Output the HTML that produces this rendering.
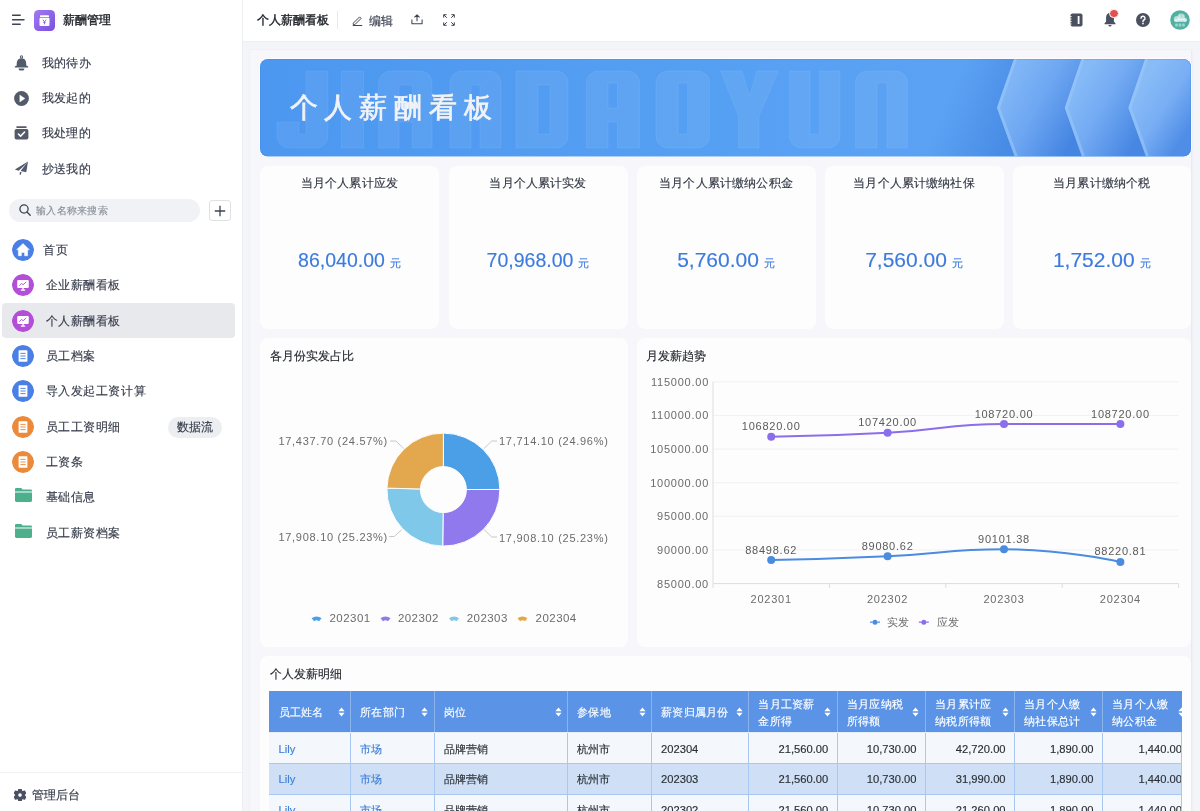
<!DOCTYPE html>
<html><head><meta charset="utf-8">
<style>
*{box-sizing:border-box;margin:0;padding:0}
html,body{width:1200px;height:811px;overflow:hidden}
#root{position:absolute;left:0;top:0;width:1200px;height:811px;will-change:transform}
body{position:relative;background:#f4f5f9;font-family:"Liberation Sans",sans-serif;color:#3a4050;-webkit-text-stroke:0.15px currentColor}
.abs{position:absolute}
#side{position:absolute;left:0;top:0;width:243px;height:811px;background:#fff;border-right:1px solid #eceef1}
.nav{position:absolute;left:41.5px;font-size:11.6px;line-height:14px;color:#363c4a;white-space:nowrap;letter-spacing:0.45px}
.ni{position:absolute;left:14px}
.it{position:absolute;left:45.5px;font-size:11.6px;line-height:14px;color:#363c4a;white-space:nowrap;letter-spacing:0.6px}
.ic{position:absolute;left:12.4px;width:22px;height:22px;border-radius:50%}
#top{position:absolute;left:243px;top:0;width:957px;height:42px;background:#fff;border-bottom:1px solid #eef0f3}
#wrap{position:absolute;left:250px;top:50px;width:941px;height:761px;background:#f6f6fb;box-shadow:0 0 2px 0.5px rgba(20,20,60,0.06)}
.card{position:absolute;background:#fdfdfe;border-radius:8px}
.ct{position:absolute;left:0;right:0;text-align:center;font-size:12px;line-height:14px;color:#333844;letter-spacing:0.15px;white-space:nowrap}
.cv{position:absolute;left:0;right:0;text-align:center;color:#3d7ade;white-space:nowrap}
.cv b{font-weight:normal;font-size:19.5px;letter-spacing:0px}
.cv i{font-style:normal;font-size:11px;margin-left:5px}
.lbl{position:absolute;font-size:11px;letter-spacing:0.72px;color:#6e6e6e;white-space:nowrap;line-height:12px}
.hd{font-size:11px;color:#fff;padding-left:9.5px;white-space:nowrap;letter-spacing:0.3px}
.td{font-size:11.2px;color:#2b2f36;padding-left:9.5px;white-space:nowrap}
.blue{color:#3f7fd9}
</style></head><body><div id="root">

<!-- SIDEBAR -->
<div id="side">
  <svg class="abs" style="left:12px;top:14px" width="13" height="12" viewBox="0 0 13 12"><path d="M0.5 1.3H8.2M0.5 5.8H12M0.5 10.3H8.2" stroke="#3d4352" stroke-width="1.4" stroke-linecap="round"/></svg>
  <svg class="abs" style="left:34px;top:10px" width="21" height="21" viewBox="0 0 21 21">
    <defs><linearGradient id="gp" x1="0" y1="0" x2="1" y2="1"><stop offset="0" stop-color="#a07af2"/><stop offset="1" stop-color="#7b4fdf"/></linearGradient></defs>
    <rect width="21" height="21" rx="4.5" fill="url(#gp)"/>
    <rect x="6" y="5.2" width="9" height="1.8" rx="0.6" fill="#fff"/>
    <rect x="5.5" y="7.8" width="10" height="8.2" rx="1" fill="#fff"/>
    <path d="M8.8 9.6L10.5 11.8L12.2 9.6M10.5 11.8V14.4M9.2 12.3H11.8" stroke="#8b5fe8" stroke-width="0.9" fill="none"/>
  </svg>
  <div class="abs" style="left:62.5px;top:13px;font-size:12px;line-height:14px;letter-spacing:0.2px;color:#1f2329;-webkit-text-stroke:0.4px #1f2329">薪酬管理</div>

  <!-- bell -->
  <svg class="ni" style="top:54.5px" width="15" height="16" viewBox="0 0 15 16"><circle cx="7.5" cy="1.9" r="1.6" fill="#535a6a"/><circle cx="7.5" cy="1.9" r="0.55" fill="#fff"/><path d="M2.7 10.6C2.7 6.6 3.2 3.4 7.5 3.2C11.8 3.4 12.3 6.6 12.3 10.6L14.2 11.6V12.6H0.8V11.6Z" fill="#535a6a"/><path d="M4.6 13.4H10.4A2.9 2.2 0 0 1 4.6 13.4Z" fill="#535a6a"/></svg>
  <div class="nav" style="top:56px">我的待办</div>
  <!-- play -->
  <svg class="ni" style="top:90.5px" width="15" height="15" viewBox="0 0 15 15"><circle cx="7.5" cy="7.5" r="7.4" fill="#535a6a"/><path d="M5.8 4.1L10.9 7.5L5.8 10.9z" fill="#fff" stroke="#fff" stroke-width="0.4" stroke-linejoin="round"/></svg>
  <div class="nav" style="top:91px">我发起的</div>
  <!-- box check -->
  <svg class="ni" style="top:126px" width="15" height="14" viewBox="0 0 15 14"><rect x="2.3" y="0.3" width="10.4" height="1.6" rx="0.7" fill="#535a6a"/><rect x="0.6" y="3" width="13.8" height="10.6" rx="1.8" fill="#535a6a"/><path d="M4.4 8L6.6 10.1L10.6 6" stroke="#fff" stroke-width="1.6" fill="none" stroke-linecap="round" stroke-linejoin="round"/></svg>
  <div class="nav" style="top:126px">我处理的</div>
  <!-- plane -->
  <svg class="ni" style="top:161px" width="15" height="14" viewBox="0 0 15 14"><path d="M14 0.4L0.9 8.4L4.6 9.7L10.4 4.6Z M14 0.4L6.6 9.9L12.3 11.3Z M5.9 10.9L7.6 10.9L6.6 13.9L5.6 13.6Z" fill="#535a6a"/></svg>
  <div class="nav" style="top:162px">抄送我的</div>

  <!-- search -->
  <div class="abs" style="left:9px;top:198.5px;width:191px;height:23px;border-radius:12px;background:#f1f2f5"></div>
  <svg class="abs" style="left:19px;top:204px" width="12" height="12" viewBox="0 0 12 12"><circle cx="5" cy="5" r="4.1" stroke="#3d4352" stroke-width="1.3" fill="none"/><path d="M8 8L11.2 11.2" stroke="#3d4352" stroke-width="1.3" stroke-linecap="round"/></svg>
  <div class="abs" style="left:36px;top:204.5px;font-size:10.2px;line-height:12px;letter-spacing:0.3px;color:#8c929c">输入名称来搜索</div>
  <div class="abs" style="left:209px;top:199.5px;width:22px;height:21.5px;border:1px solid #dfe1e5;border-radius:3px;background:#fff"></div>
  <svg class="abs" style="left:214px;top:204.5px" width="12" height="12" viewBox="0 0 12 12"><path d="M6 0.8V11.2M0.8 6H11.2" stroke="#3d4352" stroke-width="1.3"/></svg>

  <!-- items -->
  <div class="abs" style="left:2px;top:302.5px;width:233px;height:35.5px;border-radius:4px;background:#e8e9ed"></div>

  <svg class="ic" style="top:239.0px" viewBox="0 0 21 21"><circle cx="10.5" cy="10.5" r="10.5" fill="#4a80e6"/><path d="M10.5 4.4L16.6 10.2H14.9V16H12V12.8H9V16H6.1V10.2H4.4z" fill="#fff" stroke="#fff" stroke-width="0.5" stroke-linejoin="round"/></svg>
  <div class="it" style="top:242.5px;left:43px">首页</div>

  <svg class="ic" style="top:274.0px" viewBox="0 0 21 21"><circle cx="10.5" cy="10.5" r="10.5" fill="#b24ed8"/><rect x="5" y="5.8" width="11" height="7.6" rx="1" fill="#fff"/><path d="M7 11.2L9 9L10.6 10.2L13.6 7.6" stroke="#b24ed8" stroke-width="0.9" fill="none"/><path d="M8.4 15.4h4.2M10.5 13.4v2" stroke="#fff" stroke-width="1.3"/></svg>
  <div class="it" style="top:278px">企业薪酬看板</div>

  <svg class="ic" style="top:309.5px" viewBox="0 0 21 21"><circle cx="10.5" cy="10.5" r="10.5" fill="#b24ed8"/><rect x="5" y="5.8" width="11" height="7.6" rx="1" fill="#fff"/><path d="M7 11.2L9 9L10.6 10.2L13.6 7.6" stroke="#b24ed8" stroke-width="0.9" fill="none"/><path d="M8.4 15.4h4.2M10.5 13.4v2" stroke="#fff" stroke-width="1.3"/></svg>
  <div class="it" style="top:313.5px">个人薪酬看板</div>

  <svg class="ic" style="top:344.5px" viewBox="0 0 21 21"><circle cx="10.5" cy="10.5" r="10.5" fill="#4a80e6"/><rect x="6.3" y="5" width="8.4" height="11" rx="0.8" fill="#fff"/><path d="M8 8h5M8 10.5h5M8 13h5" stroke="#4a80e6" stroke-width="0.9"/></svg>
  <div class="it" style="top:349px">员工档案</div>

  <svg class="ic" style="top:380.0px" viewBox="0 0 21 21"><circle cx="10.5" cy="10.5" r="10.5" fill="#4a80e6"/><rect x="6.3" y="5" width="8.4" height="11" rx="0.8" fill="#fff"/><path d="M8 8h5M8 10.5h5M8 13h5" stroke="#4a80e6" stroke-width="0.9"/></svg>
  <div class="it" style="top:384px">导入发起工资计算</div>

  <svg class="ic" style="top:415.5px" viewBox="0 0 21 21"><circle cx="10.5" cy="10.5" r="10.5" fill="#ec8a3b"/><rect x="6.3" y="5" width="8.4" height="11" rx="0.8" fill="#fff"/><path d="M8 8h5M8 10.5h5M8 13h5" stroke="#ec8a3b" stroke-width="0.9"/></svg>
  <div class="it" style="top:419.5px">员工工资明细</div>
  <div class="abs" style="left:167.5px;top:416.5px;width:54px;height:21.5px;border-radius:11px;background:#eceef1;font-size:12px;line-height:21.5px;text-align:center;color:#363c4a">数据流</div>

  <svg class="ic" style="top:450.5px" viewBox="0 0 21 21"><circle cx="10.5" cy="10.5" r="10.5" fill="#ec8a3b"/><rect x="6.3" y="5" width="8.4" height="11" rx="0.8" fill="#fff"/><path d="M8 8h5M8 10.5h5M8 13h5" stroke="#ec8a3b" stroke-width="0.9"/></svg>
  <div class="it" style="top:455px">工资条</div>

  <svg class="abs" style="left:15px;top:488px" width="17" height="14" viewBox="0 0 17 14"><path d="M0 1.2A1.2 1.2 0 0 1 1.2 0H6.2L7.6 1.5H15.8A1.2 1.2 0 0 1 17 2.7V3.6H0z" fill="#4bb08b"/><path d="M0 4.4H17V12.6A1.4 1.4 0 0 1 15.6 14H1.4A1.4 1.4 0 0 1 0 12.6z" fill="#4bb08b"/></svg>
  <div class="it" style="top:490px">基础信息</div>

  <svg class="abs" style="left:15px;top:523.5px" width="17" height="14" viewBox="0 0 17 14"><path d="M0 1.2A1.2 1.2 0 0 1 1.2 0H6.2L7.6 1.5H15.8A1.2 1.2 0 0 1 17 2.7V3.6H0z" fill="#4bb08b"/><path d="M0 4.4H17V12.6A1.4 1.4 0 0 1 15.6 14H1.4A1.4 1.4 0 0 1 0 12.6z" fill="#4bb08b"/></svg>
  <div class="it" style="top:525.5px">员工薪资档案</div>

  <div class="abs" style="left:0;top:772px;width:242px;height:1px;background:#f0f1f3"></div>
  <svg class="abs" style="left:13.5px;top:788.7px" width="12" height="12.5" viewBox="0 0 12 12.5"><path d="M4.05 2.72 L4.84 0.11 L7.16 0.11 L7.95 2.72 L10.60 2.10 L11.77 4.11 L9.90 6.10 L11.77 8.09 L10.60 10.10 L7.95 9.48 L7.16 12.09 L4.84 12.09 L4.05 9.48 L1.40 10.10 L0.23 8.09 L2.10 6.10 L0.23 4.11 L1.40 2.10Z" fill="#4a5060" stroke="#4a5060" stroke-width="1.1" stroke-linejoin="round"/><circle cx="6" cy="6.1" r="1.8" fill="#fff"/></svg>
  <div class="abs" style="left:31.5px;top:788px;font-size:12px;line-height:14px;letter-spacing:0.2px;color:#363c4a">管理后台</div>
</div>

<!-- TOPBAR -->
<div id="top">
  <div class="abs" style="left:14px;top:13px;font-size:12px;line-height:14px;letter-spacing:0.1px;color:#1f2329;-webkit-text-stroke:0.4px #1f2329">个人薪酬看板</div>
  <div class="abs" style="left:94px;top:11px;width:1px;height:18px;background:#e8e9ec"></div>
  <svg class="abs" style="left:109px;top:14.5px" width="11" height="11" viewBox="0 0 11 11"><path d="M1.3 8.2L7.6 1.9L9.1 3.4L2.8 9.7H1.3z" stroke="#3d4352" stroke-width="1" fill="none" stroke-linejoin="round"/><path d="M0.8 10.5H10.2" stroke="#3d4352" stroke-width="1"/></svg>
  <div class="abs" style="left:125.5px;top:13.5px;font-size:12px;line-height:14px;letter-spacing:0.2px;color:#3a4050">编辑</div>
  <svg class="abs" style="left:168px;top:14px" width="12" height="11" viewBox="0 0 12 11"><path d="M6 7.2V1M3.4 3.4L6 0.8L8.6 3.4M0.9 5.6V9.8H11.1V5.6" stroke="#3d4352" stroke-width="1.05" fill="none" stroke-linejoin="round"/></svg>
  <svg class="abs" style="left:200px;top:14px" width="12" height="12" viewBox="0 0 12 12"><path d="M0.7 3.6V0.7H3.6M8.4 0.7H11.3V3.6M11.3 8.4V11.3H8.4M3.6 11.3H0.7V8.4M0.9 0.9L3.8 3.8M11.1 0.9L8.2 3.8M11.1 11.1L8.2 8.2M0.9 11.1L3.8 8.2" stroke="#3d4352" stroke-width="1" fill="none"/></svg>

  <svg class="abs" style="left:826px;top:13px" width="14" height="14" viewBox="0 0 14 14"><rect x="1.5" y="0.5" width="12" height="13" rx="2" fill="#4a5060"/><rect x="8.7" y="3" width="1.8" height="8" fill="#fff"/><path d="M0.3 3.5h2.4M0.3 6h2.4M0.3 8.5h2.4M0.3 11h2.4" stroke="#fff" stroke-width="0.8"/></svg>
  <svg class="abs" style="left:861px;top:12px" width="12" height="15" viewBox="0 0 12 15"><path d="M6 1C8.5 1 9.9 3 9.9 5.6V9.6L11.5 11.6C11.7 11.9 11.5 12.3 11.1 12.3H0.9C0.5 12.3 0.3 11.9 0.5 11.6L2.1 9.6V5.6C2.1 3 3.5 1 6 1Z M4.4 12.9H7.6A1.6 1.5 0 0 1 4.4 12.9Z" fill="#4a5060"/></svg>
  <div class="abs" style="left:866.3px;top:8.8px;width:9.6px;height:9.6px;border-radius:50%;background:#e0514f;border:1.2px solid #fff"></div>
  <svg class="abs" style="left:893.2px;top:13px" width="14" height="14" viewBox="0 0 14 14"><circle cx="7" cy="7" r="7" fill="#4a5060"/><path d="M5 5.2a2 2 0 1 1 2.9 1.8c-0.6 0.3-0.9 0.7-0.9 1.3v0.5" stroke="#fff" stroke-width="1.4" fill="none" stroke-linecap="round"/><circle cx="7" cy="10.6" r="0.85" fill="#fff"/></svg>
  <svg class="abs" style="left:927px;top:10px" width="20" height="20" viewBox="0 0 20 20"><circle cx="10" cy="10" r="9.8" fill="#50b1a3"/><g fill="#ffffff" fill-opacity="0.55"><circle cx="6.7" cy="8.9" r="2.9"/><circle cx="11.2" cy="7.1" r="3.7"/><circle cx="15" cy="9.8" r="2.1"/><rect x="4.2" y="8.6" width="12.4" height="3.3" rx="1.6"/></g><path d="M9.3 4.4L11 11.2L13.8 5.2" stroke="#fff" stroke-opacity="0.5" stroke-width="0.8" fill="none"/><g fill="#fff" fill-opacity="0.45"><rect x="5.2" y="13.4" width="2.6" height="3" rx="0.5"/><rect x="8.7" y="13.4" width="2.6" height="3" rx="0.5"/><rect x="12.2" y="13.4" width="2.6" height="3" rx="0.5"/></g></svg>
</div>

<!-- CONTENT WRAP -->
<div id="wrap"></div>

<!-- BANNER -->
<svg class="abs" style="left:259px;top:58px" width="933" height="99" viewBox="-1 -1 933 99">
  <defs>
    <clipPath id="bc"><rect x="0" y="0" width="931" height="97.5" rx="8"/></clipPath>
    <linearGradient id="bg0" x1="0" y1="0" x2="1" y2="0">
      <stop offset="0" stop-color="#4c97f0"/><stop offset="0.5" stop-color="#56a0f3"/><stop offset="0.75" stop-color="#5ca2f3"/><stop offset="1" stop-color="#5ca2f3"/>
    </linearGradient>
    <linearGradient id="sh" gradientUnits="userSpaceOnUse" x1="690" y1="35" x2="756" y2="62">
      <stop offset="0" stop-color="#3a7cdc" stop-opacity="0"/><stop offset="1" stop-color="#3a7cdc" stop-opacity="0.6"/>
    </linearGradient>
    <linearGradient id="c1" gradientUnits="userSpaceOnUse" x1="752" y1="25" x2="822" y2="65">
      <stop offset="0" stop-color="#7fb5f6"/><stop offset="0.4" stop-color="#6ea7f2"/><stop offset="1" stop-color="#4585e2"/>
    </linearGradient>
    <linearGradient id="c2" gradientUnits="userSpaceOnUse" x1="818" y1="25" x2="886" y2="65">
      <stop offset="0" stop-color="#86baf7"/><stop offset="0.4" stop-color="#74abf3"/><stop offset="1" stop-color="#4787e3"/>
    </linearGradient>
    <linearGradient id="c3" gradientUnits="userSpaceOnUse" x1="880" y1="25" x2="935" y2="62">
      <stop offset="0" stop-color="#89bcf7"/><stop offset="0.5" stop-color="#78aef4"/><stop offset="1" stop-color="#4f8de6"/>
    </linearGradient>
  </defs>
  <rect x="-1" y="-1" width="933" height="99.5" rx="9" fill="#fcfdff"/>
  <g clip-path="url(#bc)">
    <rect x="0" y="0" width="931" height="97.5" fill="url(#bg0)"/>
    <g fill="#ffffff" fill-opacity="0.065" stroke="#ffffff" stroke-opacity="0.07" stroke-width="1" fill-rule="evenodd">
      <path d="M46 12H68V77A12 12 0 0 1 56 89H29A12 12 0 0 1 17 77V63H39V75H46Z"/>
      <path d="M81.5 12H103.5V89H81.5Z"/>
      <path d="M118.6 89V24A12 12 0 0 1 130.6 12H160A12 12 0 0 1 172 24V89H152.5V63H139V89Z M139 26H152.5V49H139Z"/>
      <path d="M190 89V24A12 12 0 0 1 202 12H229A12 12 0 0 1 241 24V89H220V26H211V89Z"/>
      <path d="M256 12H296A12 12 0 0 1 308 24V77A12 12 0 0 1 296 89H256Z M278 26H290V75H278Z"/>
      <path d="M326.5 89V24A12 12 0 0 1 338.5 12H367.5A12 12 0 0 1 379.5 24V89H357.5V63H348V89Z M348 24H357.5V49H348Z"/>
      <path d="M408 12H437.6A12 12 0 0 1 449.6 24V77A12 12 0 0 1 437.6 89H408A12 12 0 0 1 396 77V24A12 12 0 0 1 408 12Z M418 24H427.6V75H418Z"/>
      <path d="M460.6 12H482L489.5 37L497 12H518.4L499 57V89H478.5V57Z"/>
      <path d="M529.4 12H550V75H559.6V12H580V77A12 12 0 0 1 568 89H541.4A12 12 0 0 1 529.4 77Z"/>
      <path d="M595.4 89V24A12 12 0 0 1 607.4 12H635.6A12 12 0 0 1 647.6 24V89H627V24H617V89Z"/>
    </g>
    <path d="M660 0H754L737 48.7L754.8 97.5H660Z" fill="url(#sh)"/>
    <path d="M754 0H821.4L804.8 48.7L822 97.5H754.8L737 48.7Z" fill="url(#c1)"/>
    <path d="M821.4 0H885L868.4 48.7L886 97.5H822L804.8 48.7Z" fill="url(#c2)"/>
    <path d="M885 0H931V97.5H886L868.4 48.7Z" fill="url(#c3)"/>
    <rect x="0" y="0" width="931" height="97.5" rx="8" fill="none" stroke="#3a82e4" stroke-opacity="0.45" stroke-width="1.2"/>
    <path d="M755.5 0L738.5 48.7L756.3 97.5M823 0L806.3 48.7L823.6 97.5M886.6 0L870 48.7L887.6 97.5" stroke="#9cc8fa" stroke-opacity="0.55" stroke-width="3" fill="none"/>
  </g>
  <text x="29.5" y="57.5" font-family="Liberation Sans, sans-serif" font-size="28" letter-spacing="6.9" fill="#f1f3f7" stroke="#f1f3f7" stroke-width="0.7">个人薪酬看板</text>
</svg>

<!-- STAT CARDS -->
<div class="card" style="left:260px;top:165.5px;width:179px;height:163px"><div class="ct" style="top:10px">当月个人累计应发</div><div class="cv" style="top:83px"><b>86,040.00</b><i>元</i></div></div>
<div class="card" style="left:448.5px;top:165.5px;width:179px;height:163px"><div class="ct" style="top:10px">当月个人累计实发</div><div class="cv" style="top:83px"><b>70,968.00</b><i>元</i></div></div>
<div class="card" style="left:636.5px;top:165.5px;width:179px;height:163px"><div class="ct" style="top:10px">当月个人累计缴纳公积金</div><div class="cv" style="top:82px"><b style="font-size:21px">5,760.00</b><i>元</i></div></div>
<div class="card" style="left:824.5px;top:165.5px;width:179px;height:163px"><div class="ct" style="top:10px">当月个人累计缴纳社保</div><div class="cv" style="top:82px"><b style="font-size:21px">7,560.00</b><i>元</i></div></div>
<div class="card" style="left:1012.5px;top:165.5px;width:178.5px;height:163px"><div class="ct" style="top:10px">当月累计缴纳个税</div><div class="cv" style="top:82px"><b style="font-size:21px">1,752.00</b><i>元</i></div></div>

<!-- CHART CARDS -->
<div class="card" style="left:260px;top:338px;width:367.5px;height:308.5px"><div class="abs" style="left:10px;top:11px;font-size:12px;line-height:14px;color:#1f2329">各月份实发占比</div></div>
<div class="card" style="left:636.5px;top:338px;width:554.5px;height:308.5px"><div class="abs" style="left:9.5px;top:11px;font-size:12px;line-height:14px;color:#1f2329">月发薪趋势</div></div>
<div class="card" style="left:260px;top:656px;width:931px;height:200px"><div class="abs" style="left:9.5px;top:11px;font-size:12px;line-height:14px;color:#1f2329">个人发薪明细</div></div>

<!-- TABLE -->
<div class="abs" style="left:269px;top:691px;width:913px;height:120px;overflow:hidden">
<div class="abs" style="left:0;top:0;width:922px;height:41px;background:#5b94e7"></div>
<div class="abs" style="left:0;top:41px;width:922px;height:1px;background:#e6eefa"></div>
<div class="abs" style="left:0;top:42.0px;width:922px;height:30.5px;background:#f4f7fc"></div>
<div class="abs" style="left:0;top:72.5px;width:922px;height:30.5px;background:#cfe0f6"></div>
<div class="abs" style="left:0;top:72.0px;width:922px;height:1px;background:#a9c7f3"></div>
<div class="abs" style="left:0;top:103.0px;width:922px;height:30.5px;background:#f4f7fc"></div>
<div class="abs" style="left:0;top:102.5px;width:922px;height:1px;background:#a9c7f3"></div>
<div class="abs" style="left:912px;top:41px;width:1px;height:100px;background:#a9c7f3;z-index:2"></div>
<div class="abs hd" style="left:0.0px;top:12.5px;width:81.5px;line-height:17px">员工姓名<svg class="abs" style="right:6px;top:3.5px" width="7" height="10" viewBox="0 0 7 10"><path d="M0.4 4.2L3.5 0.5L6.6 4.2z M0.4 5.8L3.5 9.5L6.6 5.8z" fill="#fff"/></svg></div>
<div class="abs td blue" style="left:0.0px;top:42.5px;width:81.5px;height:30.5px;line-height:30.5px;">Lily</div>
<div class="abs td blue" style="left:0.0px;top:73.0px;width:81.5px;height:30.5px;line-height:30.5px;">Lily</div>
<div class="abs td blue" style="left:0.0px;top:103.5px;width:81.5px;height:30.5px;line-height:30.5px;">Lily</div>
<div class="abs" style="left:81.0px;top:0;width:1px;height:41px;background:#8db3ec"></div>
<div class="abs" style="left:81.0px;top:42px;width:1px;height:200px;background:#a9c7f3"></div>
<div class="abs hd" style="left:81.5px;top:12.5px;width:83.5px;line-height:17px">所在部门<svg class="abs" style="right:6px;top:3.5px" width="7" height="10" viewBox="0 0 7 10"><path d="M0.4 4.2L3.5 0.5L6.6 4.2z M0.4 5.8L3.5 9.5L6.6 5.8z" fill="#fff"/></svg></div>
<div class="abs td blue" style="left:81.5px;top:42.5px;width:83.5px;height:30.5px;line-height:30.5px;">市场</div>
<div class="abs td blue" style="left:81.5px;top:73.0px;width:83.5px;height:30.5px;line-height:30.5px;">市场</div>
<div class="abs td blue" style="left:81.5px;top:103.5px;width:83.5px;height:30.5px;line-height:30.5px;">市场</div>
<div class="abs" style="left:164.5px;top:0;width:1px;height:41px;background:#8db3ec"></div>
<div class="abs" style="left:164.5px;top:42px;width:1px;height:200px;background:#a9c7f3"></div>
<div class="abs hd" style="left:165.0px;top:12.5px;width:133.5px;line-height:17px">岗位<svg class="abs" style="right:6px;top:3.5px" width="7" height="10" viewBox="0 0 7 10"><path d="M0.4 4.2L3.5 0.5L6.6 4.2z M0.4 5.8L3.5 9.5L6.6 5.8z" fill="#fff"/></svg></div>
<div class="abs td" style="left:165.0px;top:42.5px;width:133.5px;height:30.5px;line-height:30.5px;">品牌营销</div>
<div class="abs td" style="left:165.0px;top:73.0px;width:133.5px;height:30.5px;line-height:30.5px;">品牌营销</div>
<div class="abs td" style="left:165.0px;top:103.5px;width:133.5px;height:30.5px;line-height:30.5px;">品牌营销</div>
<div class="abs" style="left:298.0px;top:0;width:1px;height:41px;background:#8db3ec"></div>
<div class="abs" style="left:298.0px;top:42px;width:1px;height:200px;background:#a9c7f3"></div>
<div class="abs hd" style="left:298.5px;top:12.5px;width:84.0px;line-height:17px">参保地<svg class="abs" style="right:6px;top:3.5px" width="7" height="10" viewBox="0 0 7 10"><path d="M0.4 4.2L3.5 0.5L6.6 4.2z M0.4 5.8L3.5 9.5L6.6 5.8z" fill="#fff"/></svg></div>
<div class="abs td" style="left:298.5px;top:42.5px;width:84.0px;height:30.5px;line-height:30.5px;">杭州市</div>
<div class="abs td" style="left:298.5px;top:73.0px;width:84.0px;height:30.5px;line-height:30.5px;">杭州市</div>
<div class="abs td" style="left:298.5px;top:103.5px;width:84.0px;height:30.5px;line-height:30.5px;">杭州市</div>
<div class="abs" style="left:382.0px;top:0;width:1px;height:41px;background:#8db3ec"></div>
<div class="abs" style="left:382.0px;top:42px;width:1px;height:200px;background:#a9c7f3"></div>
<div class="abs hd" style="left:382.5px;top:12.5px;width:97.3px;line-height:17px">薪资归属月份<svg class="abs" style="right:6px;top:3.5px" width="7" height="10" viewBox="0 0 7 10"><path d="M0.4 4.2L3.5 0.5L6.6 4.2z M0.4 5.8L3.5 9.5L6.6 5.8z" fill="#fff"/></svg></div>
<div class="abs td" style="left:382.5px;top:42.5px;width:97.3px;height:30.5px;line-height:30.5px;">202304</div>
<div class="abs td" style="left:382.5px;top:73.0px;width:97.3px;height:30.5px;line-height:30.5px;">202303</div>
<div class="abs td" style="left:382.5px;top:103.5px;width:97.3px;height:30.5px;line-height:30.5px;">202302</div>
<div class="abs" style="left:479.3px;top:0;width:1px;height:41px;background:#8db3ec"></div>
<div class="abs" style="left:479.3px;top:42px;width:1px;height:200px;background:#a9c7f3"></div>
<div class="abs hd" style="left:479.8px;top:4.5px;width:88.5px;line-height:17px">当月工资薪<br>金所得<svg class="abs" style="right:6px;top:11.5px" width="7" height="10" viewBox="0 0 7 10"><path d="M0.4 4.2L3.5 0.5L6.6 4.2z M0.4 5.8L3.5 9.5L6.6 5.8z" fill="#fff"/></svg></div>
<div class="abs td" style="left:479.8px;top:42.5px;width:88.5px;height:30.5px;line-height:30.5px;text-align:right;padding-right:9px">21,560.00</div>
<div class="abs td" style="left:479.8px;top:73.0px;width:88.5px;height:30.5px;line-height:30.5px;text-align:right;padding-right:9px">21,560.00</div>
<div class="abs td" style="left:479.8px;top:103.5px;width:88.5px;height:30.5px;line-height:30.5px;text-align:right;padding-right:9px">21,560.00</div>
<div class="abs" style="left:567.8px;top:0;width:1px;height:41px;background:#8db3ec"></div>
<div class="abs" style="left:567.8px;top:42px;width:1px;height:200px;background:#a9c7f3"></div>
<div class="abs hd" style="left:568.3px;top:4.5px;width:88.2px;line-height:17px">当月应纳税<br>所得额<svg class="abs" style="right:6px;top:11.5px" width="7" height="10" viewBox="0 0 7 10"><path d="M0.4 4.2L3.5 0.5L6.6 4.2z M0.4 5.8L3.5 9.5L6.6 5.8z" fill="#fff"/></svg></div>
<div class="abs td" style="left:568.3px;top:42.5px;width:88.2px;height:30.5px;line-height:30.5px;text-align:right;padding-right:9px">10,730.00</div>
<div class="abs td" style="left:568.3px;top:73.0px;width:88.2px;height:30.5px;line-height:30.5px;text-align:right;padding-right:9px">10,730.00</div>
<div class="abs td" style="left:568.3px;top:103.5px;width:88.2px;height:30.5px;line-height:30.5px;text-align:right;padding-right:9px">10,730.00</div>
<div class="abs" style="left:656.0px;top:0;width:1px;height:41px;background:#8db3ec"></div>
<div class="abs" style="left:656.0px;top:42px;width:1px;height:200px;background:#a9c7f3"></div>
<div class="abs hd" style="left:656.5px;top:4.5px;width:89.1px;line-height:17px">当月累计应<br>纳税所得额<svg class="abs" style="right:6px;top:11.5px" width="7" height="10" viewBox="0 0 7 10"><path d="M0.4 4.2L3.5 0.5L6.6 4.2z M0.4 5.8L3.5 9.5L6.6 5.8z" fill="#fff"/></svg></div>
<div class="abs td" style="left:656.5px;top:42.5px;width:89.1px;height:30.5px;line-height:30.5px;text-align:right;padding-right:9px">42,720.00</div>
<div class="abs td" style="left:656.5px;top:73.0px;width:89.1px;height:30.5px;line-height:30.5px;text-align:right;padding-right:9px">31,990.00</div>
<div class="abs td" style="left:656.5px;top:103.5px;width:89.1px;height:30.5px;line-height:30.5px;text-align:right;padding-right:9px">21,260.00</div>
<div class="abs" style="left:745.1px;top:0;width:1px;height:41px;background:#8db3ec"></div>
<div class="abs" style="left:745.1px;top:42px;width:1px;height:200px;background:#a9c7f3"></div>
<div class="abs hd" style="left:745.6px;top:4.5px;width:88.0px;line-height:17px">当月个人缴<br>纳社保总计<svg class="abs" style="right:6px;top:11.5px" width="7" height="10" viewBox="0 0 7 10"><path d="M0.4 4.2L3.5 0.5L6.6 4.2z M0.4 5.8L3.5 9.5L6.6 5.8z" fill="#fff"/></svg></div>
<div class="abs td" style="left:745.6px;top:42.5px;width:88.0px;height:30.5px;line-height:30.5px;text-align:right;padding-right:9px">1,890.00</div>
<div class="abs td" style="left:745.6px;top:73.0px;width:88.0px;height:30.5px;line-height:30.5px;text-align:right;padding-right:9px">1,890.00</div>
<div class="abs td" style="left:745.6px;top:103.5px;width:88.0px;height:30.5px;line-height:30.5px;text-align:right;padding-right:9px">1,890.00</div>
<div class="abs" style="left:833.1px;top:0;width:1px;height:41px;background:#8db3ec"></div>
<div class="abs" style="left:833.1px;top:42px;width:1px;height:200px;background:#a9c7f3"></div>
<div class="abs hd" style="left:833.6px;top:4.5px;width:88.4px;line-height:17px">当月个人缴<br>纳公积金<svg class="abs" style="right:6px;top:11.5px" width="7" height="10" viewBox="0 0 7 10"><path d="M0.4 4.2L3.5 0.5L6.6 4.2z M0.4 5.8L3.5 9.5L6.6 5.8z" fill="#fff"/></svg></div>
<div class="abs td" style="left:833.6px;top:42.5px;width:88.4px;height:30.5px;line-height:30.5px;text-align:right;padding-right:9px">1,440.00</div>
<div class="abs td" style="left:833.6px;top:73.0px;width:88.4px;height:30.5px;line-height:30.5px;text-align:right;padding-right:9px">1,440.00</div>
<div class="abs td" style="left:833.6px;top:103.5px;width:88.4px;height:30.5px;line-height:30.5px;text-align:right;padding-right:9px">1,440.00</div>
</div>

<!-- CHARTS -->
<svg class="abs" style="left:0;top:0" width="1200" height="811">
<path d="M443.40 433.10 A56.5 56.5 0 0 1 499.90 489.46 L466.40 489.54 A23.0 23.0 0 0 0 443.40 466.60 Z" fill="#4b9fe6" stroke="#fdfdfe" stroke-width="1" stroke-linejoin="round"/>
<path d="M499.90 489.46 A56.5 56.5 0 0 1 442.73 546.10 L443.13 512.60 A23.0 23.0 0 0 0 466.40 489.54 Z" fill="#9079ec" stroke="#fdfdfe" stroke-width="1" stroke-linejoin="round"/>
<path d="M442.73 546.10 A56.5 56.5 0 0 1 386.92 488.11 L420.41 488.99 A23.0 23.0 0 0 0 443.13 512.60 Z" fill="#7fc8e9" stroke="#fdfdfe" stroke-width="1" stroke-linejoin="round"/>
<path d="M386.92 488.11 A56.5 56.5 0 0 1 443.36 433.10 L443.39 466.60 A23.0 23.0 0 0 0 420.41 488.99 Z" fill="#e3a84e" stroke="#fdfdfe" stroke-width="1" stroke-linejoin="round"/><path d="M484 448.5L491.7 441H497M484 529.5L491.7 537H497M401.9 529.6L394.2 536.5H389M403.7 448.5L395.9 441H390" stroke="#c8c8c8" stroke-width="1" fill="none"/><g font-family="Liberation Sans, sans-serif" font-size="11" letter-spacing="0.72" fill="#6b6b6b">
<text x="499" y="445">17,714.10 (24.96%)</text>
<text x="499" y="541.5">17,908.10 (25.23%)</text>
<text x="388" y="445" text-anchor="end">17,437.70 (24.57%)</text>
<text x="388" y="540.5" text-anchor="end">17,908.10 (25.23%)</text>
</g><path d="M311.59 618.22 A7.8 7.8 0 0 1 321.61 618.22 L319.04 621.29 A3.8 3.8 0 0 0 314.16 621.29 Z" fill="#4b9fe6"/><path d="M380.49 618.22 A7.8 7.8 0 0 1 390.51 618.22 L387.94 621.29 A3.8 3.8 0 0 0 383.06 621.29 Z" fill="#9079ec"/><path d="M448.99 618.22 A7.8 7.8 0 0 1 459.01 618.22 L456.44 621.29 A3.8 3.8 0 0 0 451.56 621.29 Z" fill="#7fc8e9"/><path d="M517.49 618.22 A7.8 7.8 0 0 1 527.51 618.22 L524.94 621.29 A3.8 3.8 0 0 0 520.06 621.29 Z" fill="#e3a84e"/><g font-family="Liberation Sans, sans-serif" font-size="11.5" letter-spacing="0.45" fill="#6b6b6b">
<text x="329.5" y="622.2">202301</text><text x="397.9" y="622.2">202302</text><text x="466.7" y="622.2">202303</text><text x="535.6" y="622.2">202304</text></g><path d="M713 550.0H1178.6" stroke="#f1f1f4" stroke-width="1"/><path d="M713 516.3H1178.6" stroke="#f1f1f4" stroke-width="1"/><path d="M713 482.7H1178.6" stroke="#f1f1f4" stroke-width="1"/><path d="M713 449.1H1178.6" stroke="#f1f1f4" stroke-width="1"/><path d="M713 415.4H1178.6" stroke="#f1f1f4" stroke-width="1"/><path d="M713 381.8H1178.6" stroke="#f1f1f4" stroke-width="1"/><path d="M713 381.8V583.6M713 583.6H1178.6" stroke="#dcdde0" stroke-width="1"/><path d="M713.0 583.6V588" stroke="#dcdde0" stroke-width="1"/><path d="M829.4 583.6V588" stroke="#dcdde0" stroke-width="1"/><path d="M945.8 583.6V588" stroke="#dcdde0" stroke-width="1"/><path d="M1062.2 583.6V588" stroke="#dcdde0" stroke-width="1"/><path d="M1178.6 583.6V588" stroke="#dcdde0" stroke-width="1"/><g font-family="Liberation Sans, sans-serif" font-size="11" letter-spacing="0.75" fill="#6b6b6b" text-anchor="end"><text x="709" y="587.6">85000.00</text><text x="709" y="554.0">90000.00</text><text x="709" y="520.3">95000.00</text><text x="709" y="486.7">100000.00</text><text x="709" y="453.1">105000.00</text><text x="709" y="419.4">110000.00</text><text x="709" y="385.8">115000.00</text></g><g font-family="Liberation Sans, sans-serif" font-size="11" letter-spacing="0.75" fill="#6b6b6b" text-anchor="middle"><text x="771.2" y="603">202301</text><text x="887.6" y="603">202302</text><text x="1004.0" y="603">202303</text><text x="1120.4" y="603">202304</text></g><path d="M771.2 436.8 C771.2 436.8 829.5 436.0 887.6 432.8 C945.9 429.6 945.7 424.0 1004.0 424.0 C1062.1 424.0 1120.4 424.0 1120.4 424.0" stroke="#8b6ee9" stroke-width="2" fill="none"/><path d="M771.2 560.1 C771.2 560.1 829.4 558.8 887.6 556.2 C945.8 553.5 945.9 549.3 1004.0 549.3 C1062.3 549.3 1120.4 561.9 1120.4 561.9" stroke="#4a8ce0" stroke-width="2" fill="none"/><circle cx="771.2" cy="436.8" r="4" fill="#8b6ee9"/><circle cx="887.6" cy="432.8" r="4" fill="#8b6ee9"/><circle cx="1004.0" cy="424.0" r="4" fill="#8b6ee9"/><circle cx="1120.4" cy="424.0" r="4" fill="#8b6ee9"/><circle cx="771.2" cy="560.1" r="4" fill="#4a8ce0"/><circle cx="887.6" cy="556.2" r="4" fill="#4a8ce0"/><circle cx="1004.0" cy="549.3" r="4" fill="#4a8ce0"/><circle cx="1120.4" cy="561.9" r="4" fill="#4a8ce0"/><g font-family="Liberation Sans, sans-serif" font-size="11" letter-spacing="0.75" fill="#5a5a5a" text-anchor="middle"><text x="771.2" y="430.3">106820.00</text><text x="887.6" y="426.3">107420.00</text><text x="1004.0" y="417.5">108720.00</text><text x="1120.4" y="417.5">108720.00</text><text x="771.2" y="553.6">88498.62</text><text x="887.6" y="549.7">89080.62</text><text x="1004.0" y="542.8">90101.38</text><text x="1120.4" y="555.4">88220.81</text></g><path d="M870 622.2H872.6M877.4 622.2H880" stroke="#4a8ce0" stroke-width="1.3"/><circle cx="875" cy="622.2" r="2.5" fill="#4a8ce0"/>
<path d="M918.8 622.2H921.4M926.2 622.2H928.8" stroke="#8b6ee9" stroke-width="1.3"/><circle cx="923.8" cy="622.2" r="2.5" fill="#8b6ee9"/>
<g font-family="Liberation Sans, sans-serif" font-size="10.6" fill="#6b6b6b"><text x="887" y="626.2">实发</text><text x="936.5" y="626.2">应发</text></g>
</svg>
</div></body></html>
